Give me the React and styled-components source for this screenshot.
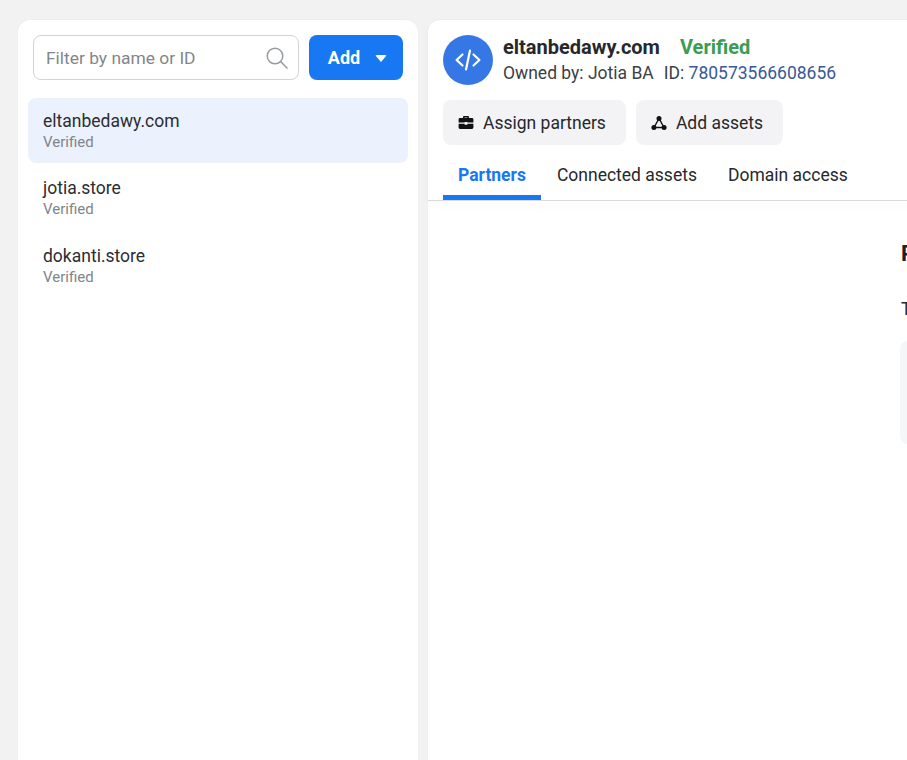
import styled, { createGlobalStyle } from "styled-components"

const GlobalStyle = createGlobalStyle`
  html, body {
    margin: 0;
    height: 100%;
    overflow: hidden;
    background: #f2f2f2;
    font-family: Roboto, "Liberation Sans", sans-serif;
    color: #1c1e21;
  }
`

const Page = styled.div`
  display: flex;
  gap: 10px;
  height: 760px;
  padding: 20px 0 0 18px;
  box-sizing: border-box;
  overflow: hidden;
`

const Sidebar = styled.aside`
  flex: 0 0 400px;
  background: #fff;
  border-radius: 12px 12px 0 0;
  padding: 15px 10px 0;
  box-sizing: border-box;
  box-shadow: 0 0 2px rgba(0, 0, 0, 0.06);
`

const Toolbar = styled.div`
  display: flex;
  gap: 10px;
  padding: 0 5px;
  margin-bottom: 18px;
`

const SearchBox = styled.div`
  width: 266px;
  height: 45px;
  box-sizing: border-box;
  display: flex;
  align-items: center;
  justify-content: space-between;
  padding: 0 10px 0 12px;
  border: 1px solid #d3d3d3;
  border-radius: 8px;
  background: #fff;
`

const Placeholder = styled.span`
  font-size: 17.4px;
  color: #82868b;
`

const AddButton = styled.button`
  width: 94px;
  height: 45px;
  display: flex;
  align-items: center;
  justify-content: center;
  gap: 15px;
  padding: 0 0 0 3px;
  border: 0;
  border-radius: 8px;
  background: #1877f2;
  color: #fff;
  font: 700 18px Roboto, sans-serif;
`

const Caret = styled.span`
  width: 0;
  height: 0;
  border-left: 6.5px solid transparent;
  border-right: 6.5px solid transparent;
  border-top: 7px solid #fff;
  margin-top: 2px;
  border-radius: 2px;
`

const DomainList = styled.ul`
  list-style: none;
  margin: 0;
  padding: 0;
`

const DomainItem = styled.li`
  height: ${({ $active }) => ($active ? "65px" : "67.5px")};
  box-sizing: border-box;
  padding: ${({ $active }) => ($active ? "13px" : "15px")} 15px 0;
  border-radius: 8px;
  background: ${({ $active }) => ($active ? "#ebf2fe" : "transparent")};
`

const DomainName = styled.div`
  font-size: 17.5px;
  line-height: 21px;
  color: #2b2d31;
`

const DomainStatus = styled.div`
  font-size: 15px;
  line-height: 21px;
  color: #80858b;
`

const Main = styled.main`
  flex: 0 0 900px;
  background: #fff;
  border-radius: 12px 12px 0 0;
  box-shadow: 0 0 2px rgba(0, 0, 0, 0.06);
`

const Header = styled.header`
  padding: 15px 15px 0;
  border-bottom: 1px solid #d8dadd;
  box-shadow: 0 3px 12px rgba(0, 0, 0, 0.025);
`

const TitleRow = styled.div`
  display: flex;
  gap: 10px;
  align-items: center;
  height: 50px;
`

const Avatar = styled.div`
  width: 50px;
  height: 50px;
  border-radius: 50%;
  background: #3578e5;
  display: flex;
  align-items: center;
  justify-content: center;
`

const TitleLine = styled.div`
  display: flex;
  gap: 20px;
  font-size: 20px;
  line-height: 25px;
  font-weight: 700;
`

const Title = styled.span`
  color: #26282b;
`

const VerifiedLabel = styled.span`
  color: #3a9d50;
`

const OwnerLine = styled.div`
  display: flex;
  gap: 10px;
  margin-top: 1px;
  font-size: 17.5px;
  line-height: 24px;
  color: #3d4045;
`

const IdLink = styled.a`
  color: #385898;
`

const Actions = styled.div`
  display: flex;
  gap: 10px;
  margin-top: 15px;
`

const ActionButton = styled.button`
  height: 45px;
  display: flex;
  align-items: center;
  gap: 9px;
  padding: 0 20px 0 15px;
  border: 0;
  border-radius: 8px;
  background: #f3f2f4;
  color: #26282b;
  font: 400 17.5px Roboto, sans-serif;
`

const Tabs = styled.nav`
  display: flex;
  gap: 1px;
  margin-top: 10px;
`

const Tab = styled.div`
  height: 45px;
  box-sizing: border-box;
  padding: 10px 15px 0;
  font-size: 17.5px;
  line-height: 21px;
  font-weight: ${({ $active }) => ($active ? 700 : 400)};
  color: ${({ $active }) => ($active ? "#1877f2" : "#26282b")};
  border-bottom: 5px solid ${({ $active }) => ($active ? "#1877f2" : "transparent")};
`

const Content = styled.section`
  padding: 40px 0 0 473px;
`

const SectionTitle = styled.h2`
  margin: 0;
  font-size: 22px;
  line-height: 26px;
  font-weight: 700;
  color: #1c1e21;
`

const SectionText = styled.p`
  margin: 30px 0 0;
  font-size: 17.5px;
  line-height: 24px;
  color: #26282b;
`

const EmptyBox = styled.div`
  height: 103px;
  margin: 20px 0 0 -1px;
  border-radius: 8px;
  background: #f5f6f7;
`

const SearchIcon = () => (
  <svg width="22" height="22" viewBox="0 0 22 22" fill="none" stroke="#979a9e" strokeWidth="1.5" strokeLinecap="round">
    <circle cx="9" cy="9" r="7.8" />
    <path d="M14.8 14.8l6.2 6.2" />
  </svg>
)

const CodeIcon = () => (
  <svg width="26" height="22" viewBox="0 0 26 22" fill="none" stroke="#fff" strokeWidth="2.2" strokeLinecap="round" strokeLinejoin="round">
    <path d="M7.5 5.5L1.6 11l5.9 5.5" />
    <path d="M18.5 5.5l5.9 5.5-5.9 5.5" />
    <path d="M15 1.5L11 20.5" />
  </svg>
)

const BriefcaseIcon = () => (
  <svg width="16" height="16" viewBox="0 0 16 16" fill="#111">
    <path d="M5 3V2.2C5 1.5 5.5 1 6.2 1h3.6c.7 0 1.2.5 1.2 1.2V3h-1.5v-.6h-3V3H5z" />
    <path d="M2 3h12c.8 0 1.4.6 1.4 1.4V7.6H9.4V7H6.6v.6H.6V4.4C.6 3.6 1.2 3 2 3z" />
    <path d="M.6 8.8h6v1h2.8v-1h6v3.8c0 .8-.6 1.4-1.4 1.4H2c-.8 0-1.4-.6-1.4-1.4V8.8z" />
  </svg>
)

const AssetsIcon = () => (
  <svg width="16" height="16" viewBox="0 0 16 16" fill="none">
    <path d="M8 3.5L3 12.5h10L8 3.5z" stroke="#111" strokeWidth="1.4" />
    <circle cx="8" cy="3.6" r="2.5" fill="#111" />
    <circle cx="2.9" cy="12.4" r="2.5" fill="#111" />
    <circle cx="13.1" cy="12.4" r="2.5" fill="#111" />
  </svg>
)

const domains = [
  { name: "eltanbedawy.com", active: true },
  { name: "jotia.store" },
  { name: "dokanti.store" },
]

const tabs = ["Partners", "Connected assets", "Domain access"]

const App = () => {
  return (
    <Page>
      <GlobalStyle />
      <Sidebar>
        <Toolbar>
          <SearchBox>
            <Placeholder>Filter by name or ID</Placeholder>
            <SearchIcon />
          </SearchBox>
          <AddButton>
            Add
            <Caret />
          </AddButton>
        </Toolbar>
        <DomainList>
          {domains.map((domain) => (
            <DomainItem key={domain.name} $active={domain.active}>
              <DomainName>{domain.name}</DomainName>
              <DomainStatus>Verified</DomainStatus>
            </DomainItem>
          ))}
        </DomainList>
      </Sidebar>
      <Main>
        <Header>
          <TitleRow>
            <Avatar>
              <CodeIcon />
            </Avatar>
            <div>
              <TitleLine>
                <Title>eltanbedawy.com</Title>
                <VerifiedLabel>Verified</VerifiedLabel>
              </TitleLine>
              <OwnerLine>
                <span>Owned by: Jotia BA</span>
                <span>
                  ID: <IdLink>780573566608656</IdLink>
                </span>
              </OwnerLine>
            </div>
          </TitleRow>
          <Actions>
            <ActionButton>
              <BriefcaseIcon />
              Assign partners
            </ActionButton>
            <ActionButton>
              <AssetsIcon />
              Add assets
            </ActionButton>
          </Actions>
          <Tabs>
            {tabs.map((tab, i) => (
              <Tab key={tab} $active={i === 0}>
                {tab}
              </Tab>
            ))}
          </Tabs>
        </Header>
        <Content>
          <SectionTitle>Partners</SectionTitle>
          <SectionText>These partners have access to this domain.</SectionText>
          <EmptyBox />
        </Content>
      </Main>
    </Page>
  )
}

export default App
